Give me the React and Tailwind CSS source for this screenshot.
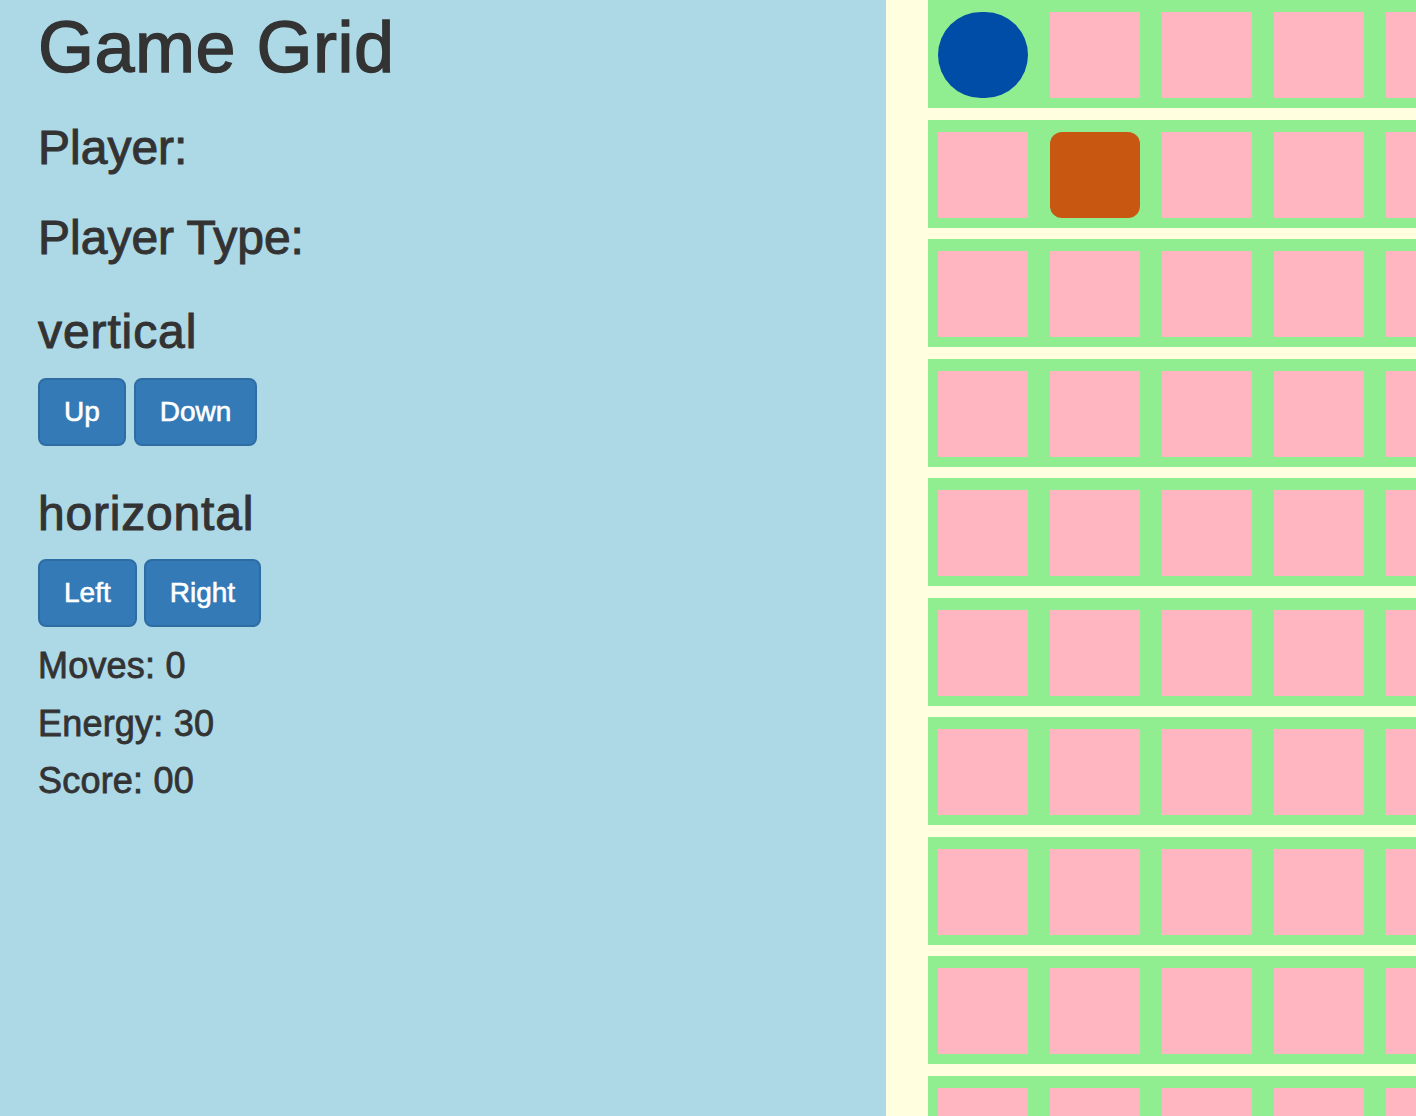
import React from 'react';

const ROWS = 10;
const COLS = 10;

const Button = ({ children }) => (
    <button className="h-[68px] px-[24px] rounded-[8px] border-2 border-[#2e6da4] bg-[#337ab7] text-white text-[28px] leading-[40px] [-webkit-text-stroke:0.6px_#fff]">
        {children}
    </button>
);

const Cell = ({ row, col }) => {
    if (row === 0 && col === 0) {
        return <div className="w-[90px] h-[86px] shrink-0 rounded-full bg-[#004da8]"></div>;
    }
    if (row === 1 && col === 1) {
        return <div className="w-[90px] h-[86px] shrink-0 rounded-[12px] bg-[#c85712]"></div>;
    }
    return <div className="w-[90px] h-[86px] shrink-0 bg-[#ffb6c1]"></div>;
};

const App = () => {
    const heading = "text-[48px] leading-[52px] [-webkit-text-stroke:1px_#333]";
    const stat = "text-[36px] leading-[40px] tracking-[0.2px] [-webkit-text-stroke:0.8px_#333]";

    return (
        <div className="flex h-[1116px] w-full overflow-hidden font-['Liberation_Sans',Arial,sans-serif] text-[#333]">
            <div className="w-[886px] shrink-0 bg-[#add8e6] pl-[38px] pt-[7px]">
                <h1 className="text-[72px] leading-[80px] tracking-[0.5px] [-webkit-text-stroke:1.4px_#333]">Game Grid</h1>
                <h3 className={`mt-[35px] ${heading}`}>Player:</h3>
                <h3 className={`mt-[38px] ${heading}`}>Player Type:</h3>
                <h3 className={`mt-[42px] tracking-[0.9px] ${heading}`}>vertical</h3>
                <div className="mt-[20px] flex gap-[8px]">
                    <Button>Up</Button>
                    <Button>Down</Button>
                </div>
                <h3 className={`mt-[42px] tracking-[0.8px] ${heading}`}>horizontal</h3>
                <div className="mt-[19px] flex gap-[7px]">
                    <Button>Left</Button>
                    <Button>Right</Button>
                </div>
                <h4 className={`mt-[19px] ${stat}`}>Moves: 0</h4>
                <h4 className={`mt-[18px] ${stat}`}>Energy: 30</h4>
                <h4 className={`mt-[17px] ${stat}`}>Score: 00</h4>
            </div>

            <div className="flex-1 min-w-0 overflow-hidden bg-[#ffffe0] pl-[42px] flex flex-col gap-[11.56px]">
                {Array.from({ length: ROWS }).map((_, r) => (
                    <div key={r} className="w-max shrink-0 h-[108px] bg-[#90ee90] pl-[10px] pr-[10px] pt-[12px] flex gap-[22px]">
                        {Array.from({ length: COLS }).map((_, c) => (
                            <Cell key={c} row={r} col={c} />
                        ))}
                    </div>
                ))}
            </div>
        </div>
    );
};

export default App;
